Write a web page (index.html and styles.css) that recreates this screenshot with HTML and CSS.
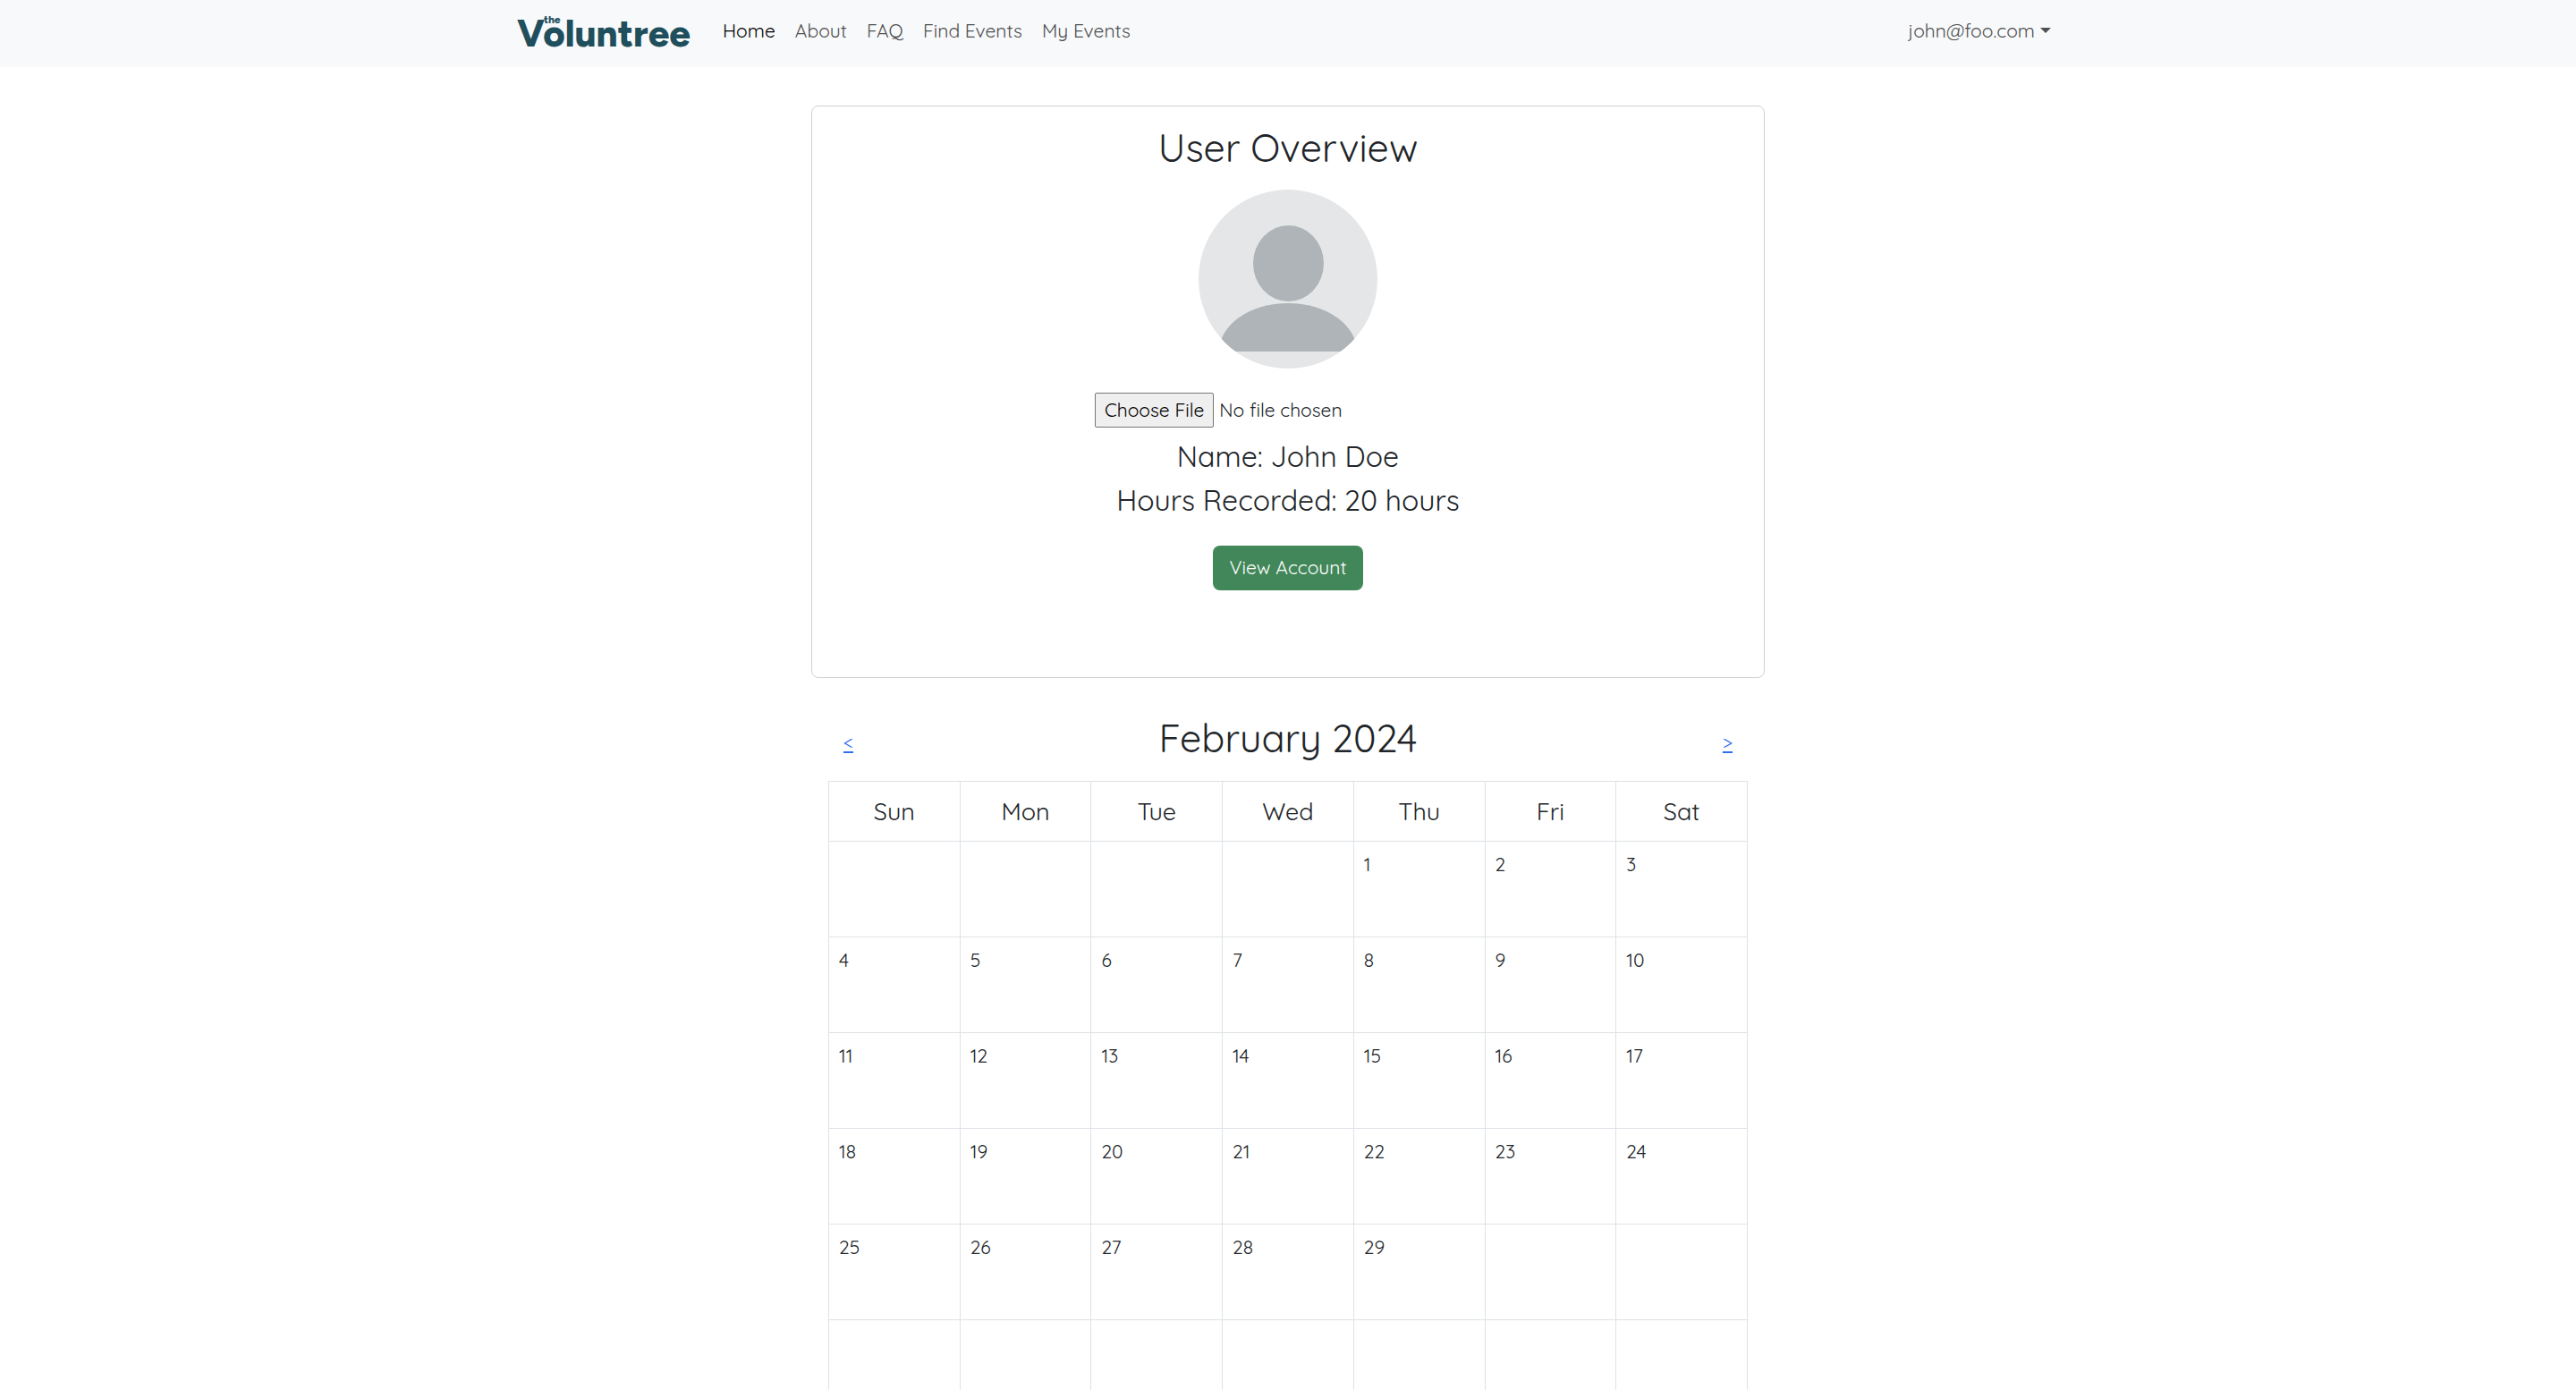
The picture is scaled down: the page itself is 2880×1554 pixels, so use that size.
FILE: index.html
```html
<!DOCTYPE html>
<html lang="en">
<head>
<meta charset="utf-8">
<meta name="viewport" content="width=device-width, initial-scale=1">
<title>The Voluntree</title>
<link rel="stylesheet" href="styles.css">
</head>
<body>
<header class="navbar">
  <nav class="navbar-inner">
    <a class="brand" href="#"><span class="brand-the">the</span><span class="brand-name">Voluntree</span></a>
    <ul class="nav-links">
      <li><a class="nav-link active" href="#">Home</a></li>
      <li><a class="nav-link" href="#">About</a></li>
      <li><a class="nav-link" href="#">FAQ</a></li>
      <li><a class="nav-link" href="#">Find Events</a></li>
      <li><a class="nav-link" href="#">My Events</a></li>
    </ul>
    <button class="account-toggle" type="button">john@foo.com<span class="caret"></span></button>
  </nav>
</header>
<main class="content">
  <section class="card">
    <h2 class="title">User Overview</h2>
    <svg class="avatar" viewBox="0 0 200 200" role="img" aria-label="Profile picture">
      <defs><clipPath id="round"><circle cx="100" cy="100" r="100"/></clipPath></defs>
      <g clip-path="url(#round)">
        <rect width="200" height="200" fill="#e4e6e7"/>
        <ellipse cx="100.500" cy="82.500" rx="39.500" ry="42.500" fill="#aeb4b7"/>
        <path d="M23 181a77 54 0 0 1 154 0z" fill="#aeb4b7"/>
      </g>
    </svg>
    <input class="file-input" type="file" aria-label="Profile picture file">
    <p class="detail">Name: John Doe</p>
    <p class="detail">Hours Recorded: 20 hours</p>
    <button class="view-account" type="button">View Account</button>
  </section>
  <section class="calendar">
    <div class="calendar-head">
      <a class="month-link" href="#" aria-label="Previous month">&lt;</a>
      <h2 class="title">February 2024</h2>
      <a class="month-link" href="#" aria-label="Next month">&gt;</a>
    </div>
    <table class="month">
      <thead>
        <tr><th>Sun</th><th>Mon</th><th>Tue</th><th>Wed</th><th>Thu</th><th>Fri</th><th>Sat</th></tr>
      </thead>
      <tbody>
        <tr><td></td><td></td><td></td><td></td><td>1</td><td>2</td><td>3</td></tr>
        <tr><td>4</td><td>5</td><td>6</td><td>7</td><td>8</td><td>9</td><td>10</td></tr>
        <tr><td>11</td><td>12</td><td>13</td><td>14</td><td>15</td><td>16</td><td>17</td></tr>
        <tr><td>18</td><td>19</td><td>20</td><td>21</td><td>22</td><td>23</td><td>24</td></tr>
        <tr><td>25</td><td>26</td><td>27</td><td>28</td><td>29</td><td></td><td></td></tr>
        <tr><td></td><td></td><td></td><td></td><td></td><td></td><td></td></tr>
      </tbody>
    </table>
  </section>
</main>
</body>
</html>
```
FILE: styles.css
```css
* { box-sizing: border-box; }

html { scrollbar-width: none; }

body {
  margin: 0;
  background: #fff;
  color: #212529;
  font-family: Quicksand, Lato, sans-serif;
  font-size: 21px;
  font-weight: 400;
  line-height: 32px;
}

button, input { font: inherit; }

.navbar { background: #f8f9fa; }

.navbar-inner {
  display: flex;
  align-items: center;
  max-width: 1760px;
  height: 75px;
  margin: 0 auto;
  padding: 0 27px 7px 18px;
}

.brand {
  position: relative;
  width: 203px;
  color: #1f4f5c;
  font-family: Figtree, Lato, sans-serif;
  font-weight: 800;
  text-decoration: none;
}

.brand-name {
  display: block;
  padding-top: 8px;
  font-size: 42px;
  line-height: 48px;
}

.brand-the {
  position: absolute;
  top: 10px;
  left: 30px;
  font-size: 12px;
  line-height: 12px;
}

.nav-links {
  display: flex;
  gap: 22px;
  margin: 0;
  padding: 0 0 0 27px;
  list-style: none;
}

.nav-link {
  color: #4f5051;
  text-decoration: none;
}

.nav-link.active { color: #000; }

.account-toggle {
  display: flex;
  align-items: center;
  gap: 6px;
  margin-left: auto;
  padding: 0;
  border: 0;
  background: none;
  color: #4f5051;
}

.caret {
  border: 6px solid transparent;
  border-top-color: currentColor;
  border-bottom: 0;
}

.content {
  display: flex;
  flex-direction: column;
  align-items: center;
  gap: 42px;
  padding-top: 43px;
}

.card {
  display: flex;
  flex-direction: column;
  align-items: center;
  width: 100%;
  max-width: 1066px;
  padding: 21px 22px 97px;
  border: 1px solid #d0d1d2;
  border-radius: 8px;
}

.title {
  margin: 0;
  font-size: 43px;
  font-weight: 400;
  line-height: 51px;
}

.avatar {
  width: 200px;
  height: 200px;
  margin: 21px 0 27px;
}

.file-input {
  width: 100%;
  max-width: 432px;
  margin-bottom: 13px;
}

.file-input::file-selector-button {
  height: 39px;
  margin: 0 6px 0 0;
  padding: 0 10px 2px;
  border: 1px solid #767676;
  border-radius: 2px;
  background: #efefef;
  color: #000;
  font: inherit;
}

.detail {
  margin: 0 0 11px;
  font-size: 32px;
  line-height: 38px;
}

.view-account {
  height: 50px;
  margin-top: 21px;
  padding: 0 18px 2px;
  border: 0;
  border-radius: 8px;
  background: #42875a;
  color: #fff;
}

.calendar {
  width: 100%;
  max-width: 1028px;
}

.calendar-head {
  display: flex;
  align-items: flex-end;
  justify-content: space-between;
  padding: 0 17px 22px;
}

.month-link {
  color: #2f6df6;
  line-height: 42px;
  text-decoration-thickness: 2px;
  text-underline-offset: 2px;
}

.month {
  width: 100%;
  border-collapse: collapse;
  table-layout: fixed;
}

.month th,
.month td {
  padding: 10px;
  border: 1px solid #dee2e6;
}

.month th {
  height: 67px;
  font-size: 27px;
  font-weight: 400;
}

.month td {
  height: 107px;
  padding: 9px 11px;
  vertical-align: top;
}
```
